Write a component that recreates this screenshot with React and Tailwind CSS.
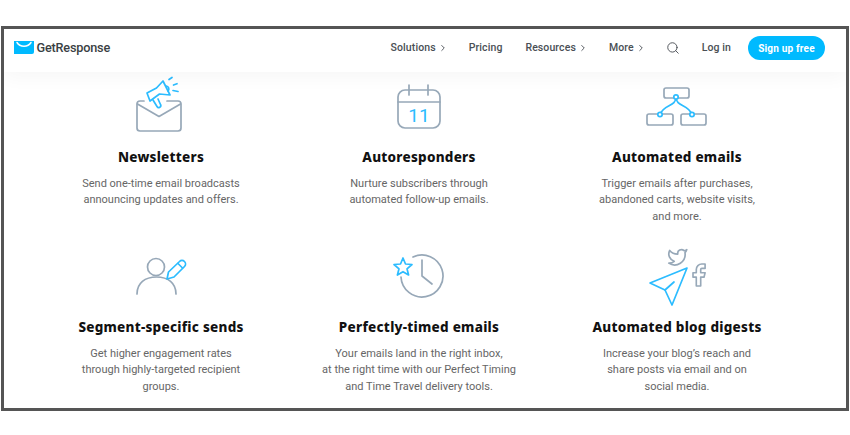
import { Search, ChevronRight } from 'lucide-react'

const GRAY = '#97a8b8'
const CYAN = '#2cbcff'

const NewslettersIcon = () => (
  <svg width="70" height="60" viewBox="0 0 70 60" fill="none" strokeLinecap="round" strokeLinejoin="round" strokeWidth="1.7">
    <path d="M18 27H14a3 3 0 0 0-3 3v24a3 3 0 0 0 3 3h38a3 3 0 0 0 3-3V30a3 3 0 0 0-3-3H41" stroke={GRAY} />
    <path d="M11.5 30L33 42.5 54.5 30" stroke={GRAY} />
    <path d="M37 7L44 21 33.5 20 24 27 21 19 30.5 14Z" stroke={CYAN} />
    <path d="M27 26L31 32.5a2 2 0 0 0 3.5-2L32 25" stroke={CYAN} />
    <path d="M40.5 12a3 3 0 0 1 1.5 5" stroke={CYAN} />
    <path d="M43 5.500L46 3.500M47.500 11L51 9.700M47 16.500L52 17.500" stroke={CYAN} />
  </svg>
)

const AutorespondersIcon = () => (
  <svg width="70" height="60" viewBox="0 0 70 60" fill="none" strokeLinecap="round" strokeWidth="1.7">
    <rect x="14" y="16" width="42" height="38" rx="7" stroke={GRAY} />
    <path d="M14 28H56M25 11V21M44 11V21" stroke={GRAY} />
    <text x="35" y="48" textAnchor="middle" fill={CYAN} fontSize="19" fontFamily="Roboto, sans-serif">11</text>
  </svg>
)

const AutomatedIcon = () => (
  <svg width="70" height="60" viewBox="0 0 70 60" fill="none" strokeWidth="1.7">
    <rect x="22" y="14" width="25" height="10" rx="2" stroke={GRAY} />
    <rect x="5" y="40" width="26" height="11" rx="2" stroke={GRAY} />
    <rect x="39" y="40" width="25" height="11" rx="2" stroke={GRAY} />
    <path d="M34 23C34 33 22 30 18 40.500M34 23C34 33 46 30 50 40.500" stroke={CYAN} />
    <circle cx="34" cy="23" r="2.200" fill="#fff" stroke={CYAN} />
    <circle cx="18" cy="40.500" r="2.200" fill="#fff" stroke={CYAN} />
    <circle cx="50" cy="40.500" r="2.200" fill="#fff" stroke={CYAN} />
  </svg>
)

const SegmentIcon = () => (
  <svg width="70" height="60" viewBox="0 0 70 60" fill="none" strokeLinecap="round" strokeLinejoin="round" strokeWidth="1.7">
    <circle cx="30" cy="23" r="8.500" stroke={GRAY} />
    <path d="M11 50C11 39 19 33 30.500 33S50 39 50 50" stroke={GRAY} />
    <path d="M41 35L42.500 28 53.500 17.500a3.500 3.500 0 0 1 5 5L48 33Z" fill="#fff" stroke={CYAN} />
    <path d="M52 19.500L56.500 24" stroke={CYAN} />
  </svg>
)

const TimedIcon = () => (
  <svg width="70" height="60" viewBox="0 0 70 60" fill="none" strokeLinecap="round" strokeLinejoin="round" strokeWidth="1.7">
    <path d="M29 13A21 21 0 1 1 17 33" stroke={GRAY} />
    <path d="M38 16V32L48 40" stroke={GRAY} />
    <path d="M19 14L21.500 20 28 20.500 23 24.800 24.600 31 19 27.700 13.400 31 15 24.800 10 20.500 16.500 20Z" stroke={CYAN} />
  </svg>
)

const BlogIcon = () => (
  <svg width="70" height="60" viewBox="0 0 70 60" fill="none" strokeLinecap="round" strokeLinejoin="round" className="overflow-visible">
    <g transform="translate(25 2) scale(0.9)" stroke={GRAY} strokeWidth="1.900">
      <path d="M22 4s-.7 2.100-2 3.400c1.600 10-9.400 17.300-18 11.600 2.200.1 4.400-.6 6-2C3 15.500.5 9.600 3 5c2.200 2.600 5.600 4.100 9 4-.9-4.200 4-6.600 7-3.800 1.100 0 3-1.200 3-1.200z" />
    </g>
    <g transform="translate(43.300 17.800) scale(1.100)" stroke={GRAY} strokeWidth="1.500">
      <path d="M18 2h-3a5 5 0 0 0-5 5v3H7v4h3v8h4v-8h3l1-4h-4V7a1 1 0 0 1 1-1h3z" />
    </g>
    <path d="M45 24L8 39 23 46 30 61Z" stroke={CYAN} strokeWidth="1.700" />
    <path d="M23 46L32 38" stroke={CYAN} strokeWidth="1.700" />
  </svg>
)

const features = [
  { title: 'Newsletters', Icon: NewslettersIcon, lines: ['Send one-time email broadcasts', 'announcing updates and offers.'] },
  { title: 'Autoresponders', Icon: AutorespondersIcon, lines: ['Nurture subscribers through', 'automated follow-up emails.'] },
  { title: 'Automated emails', Icon: AutomatedIcon, lines: ['Trigger emails after purchases,', 'abandoned carts, website visits,', 'and more.'] },
  { title: 'Segment-specific sends', Icon: SegmentIcon, lines: ['Get higher engagement rates', 'through highly-targeted recipient', 'groups.'] },
  { title: 'Perfectly-timed emails', Icon: TimedIcon, lines: ['Your emails land in the right inbox,', 'at the right time with our Perfect Timing', 'and Time Travel delivery tools.'] },
  { title: 'Automated blog digests', Icon: BlogIcon, lines: ['Increase your blog’s reach and', 'share posts via email and on', 'social media.'] },
]

const NavItem = ({ label, arrow, className = '' }) => (
  <a className={`flex items-center gap-[2px] text-[10.500px] font-medium tracking-[0.1px] text-[#4a4f55] ${className}`}>
    {label}
    {arrow && <ChevronRight size={10} strokeWidth={2.200} />}
  </a>
)

const Feature = ({ title, Icon, lines }) => (
  <div className="flex h-[170px] flex-col items-center text-center">
    <div className="flex h-[60px] items-start justify-center">
      <Icon />
    </div>
    <h3 className="mt-[13px] font-['Noto_Sans',sans-serif] text-[13.500px] leading-5 font-extrabold tracking-[0.25px] text-[#111]">{title}</h3>
    <p className="mt-[9px] text-[11px] leading-[16.250px] text-[#666]">
      {lines.map((line) => (
        <span key={line} className="block whitespace-nowrap">{line}</span>
      ))}
    </p>
  </div>
)

export default function App() {
  return (
    <div className="h-[435px] w-[850px] overflow-hidden bg-white pt-[26px] pl-px font-['Roboto',sans-serif]">
      <div className="h-[385px] w-[848px] overflow-hidden border-[3px] border-[#555]">
        <header className="relative z-10 flex h-[43px] items-center justify-between bg-white pr-[21px] pb-[5px] pl-[9.500px] shadow-[0_6px_18px_rgba(0,0,0,0.035)]">
          <div className="flex items-center gap-[3px]">
            <svg width="20" height="13" viewBox="0 0 20 13">
              <path d="M0 0H20V11a2 2 0 0 1-2 2H0Z" fill="#00baff" />
              <path d="M3 1.500C6 6.500 14 6.500 17 1.500" fill="none" stroke="#fff" strokeWidth="1.500" strokeLinecap="round" />
            </svg>
            <span className="text-[12.700px] font-medium tracking-[-0.2px] text-[#3a3f44]">GetResponse</span>
          </div>
          <nav className="flex items-center gap-[21px]">
            <NavItem label="Solutions" arrow />
            <NavItem label="Pricing" />
            <NavItem label="Resources" arrow className="ml-[2px]" />
            <NavItem label="More" arrow />
            <Search size={14} strokeWidth={1.600} className="-ml-px text-[#4a4f55]" />
            <NavItem label="Log in" className="ml-px" />
            <button className="-ml-[4px] h-6 w-[77px] rounded-full bg-[#00baff] text-[10px] font-bold tracking-[0.2px] text-white">
              Sign up free
            </button>
          </nav>
        </header>
        <main className="grid grid-cols-[258px_258px_258px] gap-x-0 pt-[2px] pl-[28px]">
          {features.map((f) => (
            <Feature key={f.title} {...f} />
          ))}
        </main>
      </div>
    </div>
  )
}
